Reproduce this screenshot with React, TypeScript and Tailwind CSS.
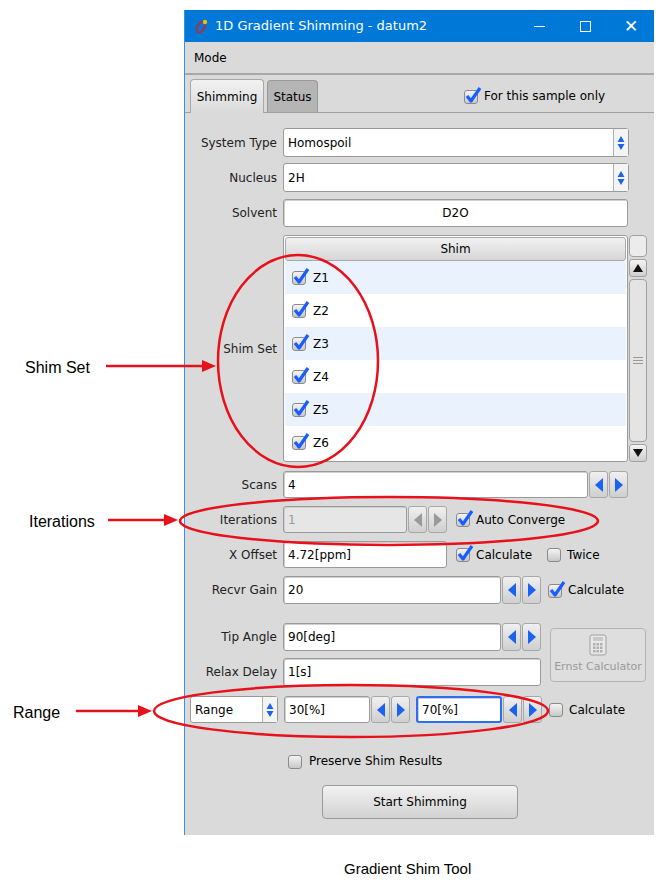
import React from "react";

const F = { fontFamily: '"DejaVu Sans", "Noto Sans", sans-serif' };

function Check({ on = true }: { on?: boolean }) {
  return (
    <span className="relative inline-block w-[15px] h-[15px] shrink-0">
      <span className="absolute left-0 top-[1px] w-[14px] h-[14px] rounded-[3px] border border-[#8a8a8a] bg-gradient-to-b from-[#f4f4f4] to-[#c8c8c8]" />
      {on && (
        <svg className="absolute left-[1px] -top-[3px]" width="17" height="18" viewBox="0 0 17 18">
          <path d="M2 10 L6 15 L15 2" stroke="#1a5cff" strokeWidth="3.2" fill="none" strokeLinejoin="round" />
        </svg>
      )}
    </span>
  );
}

function Arrows({ disabled = false }: { disabled?: boolean }) {
  const c = disabled ? "#9a9a9a" : "#1a62f0";
  return (
    <div className="flex gap-[1px] h-full shrink-0">
      {[0, 1].map((i) => (
        <div key={i} className="w-[19px] h-full rounded-[3px] border border-[#a8a8a8] bg-gradient-to-b from-[#f0f0f0] to-[#cfcfcf] flex items-center justify-center">
          <svg width="10" height="16" viewBox="0 0 10 16">
            {i === 0 ? <path d="M9 1 L1 8 L9 15 Z" fill={c} /> : <path d="M1 1 L9 8 L1 15 Z" fill={c} />}
          </svg>
        </div>
      ))}
    </div>
  );
}

function Field({ w, text, disabled = false, focus = false, center = false }: { w: string; text: string; disabled?: boolean; focus?: boolean; center?: boolean }) {
  return (
    <div className={`${w} h-full rounded-[3px] border ${focus ? "border-[#2a6ef5] border-2" : "border-[#9a9a9a]"} ${disabled ? "bg-[#e6e6e6] text-[#9a9a9a]" : "bg-white text-black"} flex items-center px-[4px] text-[12px] shadow-[inset_1px_1px_0_#cfcfcf] ${center ? "justify-center" : ""}`}>
      {text}
    </div>
  );
}

function Combo({ w, text }: { w: string; text: string }) {
  return (
    <div className={`${w} h-full rounded-[3px] border border-[#9a9a9a] bg-white flex items-stretch text-[12px]`}>
      <div className="flex-1 flex items-center px-[4px]">{text}</div>
      <div className="w-[15px] border-l border-[#b0b0b0] bg-[#f4f4f4] flex items-center justify-center">
        <svg width="8" height="16" viewBox="0 0 8 16">
          <path d="M4 1 L7.5 7 L0.5 7 Z M4 15 L0.5 9 L7.5 9 Z" fill="#1a62f0" />
        </svg>
      </div>
    </div>
  );
}

function Label({ t, dim = false }: { t: string; dim?: boolean }) {
  return <div className={`w-[92px] shrink-0 text-right text-[12px] ${dim ? "text-[#333]" : "text-[#222]"}`}>{t}</div>;
}

function Row({ label, h, mt, children }: { label: string; h: string; mt: string; children: React.ReactNode }) {
  return (
    <div className={`flex items-center ${mt} ${h}`}>
      <Label t={label} />
      <div className="ml-[6px] flex items-center h-full gap-[1px]">{children}</div>
    </div>
  );
}

export default function App() {
  const rows = ["Z1", "Z2", "Z3", "Z4", "Z5", "Z6"];
  return (
    <div className="relative w-[668px] h-[885px] bg-white overflow-hidden" style={F}>
      <div className="pt-[10px] pl-[184px]">
        <div className="w-[470px] h-[825px] bg-[#dadada] border-l border-[#3c8fdc] flex flex-col">
          <div className="h-[32px] bg-[#0078d7] flex items-center text-white text-[13px]">
            <svg className="ml-[9px]" width="16" height="16" viewBox="0 0 16 16">
              <ellipse cx="7" cy="9" rx="3.5" ry="6" transform="rotate(30 7 9)" fill="none" stroke="#d42020" strokeWidth="1.6" />
              <circle cx="11" cy="4" r="2.2" fill="#f2c200" />
            </svg>
            <span className="ml-[5px]">1D Gradient Shimming - datum2</span>
            <div className="ml-auto flex items-center">
              <span className="w-[46px] flex justify-center"><span className="w-[11px] h-[1px] bg-white" /></span>
              <span className="w-[46px] flex justify-center"><span className="w-[11px] h-[11px] border border-white" /></span>
              <span className="w-[46px] flex justify-center text-[17px] leading-none font-light">✕</span>
            </div>
          </div>
          <div className="h-[33px] flex items-center px-[9px] text-[12px] border-b-2 border-[#a8a8a8]">Mode</div>
          <div className="mt-[4px] h-[34px] flex items-end relative border-b border-[#a0a0a0]">
            <div className="ml-[5px] w-[74px] h-[34px] rounded-t-[4px] border border-b-0 border-[#a8a8a8] bg-[#e2e2e2] flex items-center justify-center text-[12px] -mb-[1px] bg-gradient-to-b from-[#f2f2f2] to-[#dadada]">Shimming</div>
            <div className="ml-[3px] w-[51px] h-[32px] rounded-t-[4px] border border-b-0 border-[#999] bg-[#b5b5b5] flex items-center justify-center text-[12px]">Status</div>
            <div className="absolute left-[279px] top-[8px] flex items-center gap-[5px] text-[12px]">
              <Check /> For this sample only
            </div>
          </div>

          <Row label="System Type" h="h-[29px]" mt="mt-[15px]"><Combo w="w-[346px]" text="Homospoil" /></Row>
          <Row label="Nucleus" h="h-[29px]" mt="mt-[6px]"><Combo w="w-[346px]" text="2H" /></Row>
          <Row label="Solvent" h="h-[28px]" mt="mt-[7px]"><Field w="w-[345px]" text="D2O" center /></Row>

          <div className="flex items-center mt-[8px] h-[227px]">
            <Label t="Shim Set" />
            <div className="ml-[6px] flex h-full">
              <div className="w-[345px] h-full border border-[#9a9a9a] rounded-[3px] bg-white flex flex-col p-[1px]">
                <div className="h-[24px] shrink-0 rounded-[3px] border border-[#a8a8a8] bg-gradient-to-b from-[#f2f2f2] to-[#d6d6d6] flex items-center justify-center text-[12px]">Shim</div>
                {rows.map((r, i) => (
                  <div key={r} className={`h-[33px] flex items-center gap-[6px] px-[7px] text-[12px] ${i % 2 === 0 ? "bg-[#eaf2fd]" : "bg-white"}`}>
                    <Check /> {r}
                  </div>
                ))}
              </div>
              <div className="ml-[1px] w-[18px] h-full flex flex-col gap-[2px]">
                <div className="h-[22px] rounded-[4px] border border-[#a0a0a0] bg-[#ececec]" />
                <div className="h-[18px] rounded-[3px] border border-[#a0a0a0] bg-gradient-to-b from-[#f4f4f4] to-[#cfcfcf] flex items-center justify-center">
                  <svg width="10" height="8" viewBox="0 0 10 8"><path d="M5 0 L10 8 L0 8 Z" fill="#111" /></svg>
                </div>
                <div className="flex-1 rounded-[4px] border border-[#a0a0a0] bg-[#e4e4e4] flex flex-col items-center justify-center gap-[2px]">
                  <span className="w-[10px] h-[1px] bg-[#999]" /><span className="w-[10px] h-[1px] bg-[#999]" /><span className="w-[10px] h-[1px] bg-[#999]" />
                </div>
                <div className="h-[18px] rounded-[3px] border border-[#a0a0a0] bg-gradient-to-b from-[#f4f4f4] to-[#cfcfcf] flex items-center justify-center">
                  <svg width="10" height="8" viewBox="0 0 10 8"><path d="M5 8 L10 0 L0 0 Z" fill="#111" /></svg>
                </div>
              </div>
            </div>
          </div>

          <Row label="Scans" h="h-[27px]" mt="mt-[9px]"><Field w="w-[305px]" text="4" /><Arrows /></Row>
          <Row label="Iterations" h="h-[27px]" mt="mt-[8px]">
            <Field w="w-[124px]" text="1" disabled /><Arrows disabled />
            <span className="ml-[8px] flex items-center gap-[5px] text-[12px]"><Check /> Auto Converge</span>
          </Row>
          <Row label="X Offset" h="h-[27px]" mt="mt-[8px]">
            <Field w="w-[164px]" text="4.72[ppm]" />
            <span className="ml-[8px] flex items-center gap-[5px] text-[12px]"><Check /> Calculate</span>
            <span className="ml-[14px] flex items-center gap-[5px] text-[12px]"><Check on={false} /> Twice</span>
          </Row>
          <Row label="Recvr Gain" h="h-[28px]" mt="mt-[8px]">
            <Field w="w-[218px]" text="20" /><Arrows />
            <span className="ml-[6px] flex items-center gap-[5px] text-[12px]"><Check /> Calculate</span>
          </Row>

          <div className="flex items-center mt-[19px]">
            <div className="flex flex-col gap-[7px]">
              <Row label="Tip Angle" h="h-[28px]" mt="mt-0"><Field w="w-[218px]" text="90[deg]" /><Arrows /></Row>
              <Row label="Relax Delay" h="h-[28px]" mt="mt-0"><Field w="w-[258px]" text="1[s]" /></Row>
            </div>
            <div className="ml-[9px] w-[96px] h-[54px] rounded-[4px] border border-[#b4b4b4] bg-[#dedede] flex flex-col items-center justify-center gap-[3px] text-[11px] text-[#9a9a9a]">
              <svg width="18" height="22" viewBox="0 0 18 22">
                <rect x="1" y="1" width="16" height="20" rx="2" fill="#e8e8e8" stroke="#a0a0a0" />
                <rect x="4" y="3" width="10" height="4" fill="#c8c8c8" />
                {[0, 1, 2].map((r) => [0, 1, 2].map((c) => <rect key={`${r}${c}`} x={4 + c * 3.5} y={9 + r * 3.5} width="2.5" height="2.5" fill="#b0b0b0" />))}
              </svg>
              Ernst Calculator
            </div>
          </div>

          <div className="flex items-center mt-[10px] h-[27px] gap-[1px]">
            <div className="ml-[5px] h-full"><Combo w="w-[88px]" text="Range" /></div>
            <div className="ml-[5px] h-full flex gap-[1px]"><Field w="w-[86px]" text="30[%]" /><Arrows /></div>
            <div className="ml-[5px] h-full flex gap-[1px]"><Field w="w-[86px]" text="70[%]" focus /><Arrows /></div>
            <span className="ml-[6px] flex items-center gap-[5px] text-[12px]"><Check on={false} /> Calculate</span>
          </div>

          <div className="mt-[29px] h-[18px] flex items-center gap-[6px] pl-[103px] text-[12px]">
            <Check on={false} /> Preserve Shim Results
          </div>
          <div className="mt-[15px] ml-[137px] w-[196px] h-[34px] rounded-[4px] border border-[#9a9a9a] bg-gradient-to-b from-[#f2f2f2] to-[#d2d2d2] flex items-center justify-center text-[12px]">Start Shimming</div>
        </div>
      </div>

      <div className="absolute left-[344px] top-[858px] text-[15px] text-black" style={{ fontFamily: '"Liberation Sans", Arial, sans-serif' }}>Gradient Shim Tool</div>
      <div className="absolute left-[25px] top-[356px] text-[16px]" style={{ fontFamily: '"Liberation Sans", Arial, sans-serif' }}>Shim Set</div>
      <div className="absolute left-[29px] top-[510px] text-[16px]" style={{ fontFamily: '"Liberation Sans", Arial, sans-serif' }}>Iterations</div>
      <div className="absolute left-[13px] top-[701px] text-[16px]" style={{ fontFamily: '"Liberation Sans", Arial, sans-serif' }}>Range</div>
      <svg className="absolute left-0 top-0 pointer-events-none" width="668" height="885">
        <g stroke="#e8101a" strokeWidth="2.5" fill="none">
          <ellipse cx="298" cy="361" rx="80" ry="106" />
          <ellipse cx="389" cy="521" rx="209" ry="24" />
          <ellipse cx="351" cy="711" rx="197" ry="26" />
          <line x1="106" y1="366" x2="204" y2="366" />
          <line x1="108" y1="520" x2="166" y2="520" />
          <line x1="76" y1="711" x2="140" y2="711" />
        </g>
        <g fill="#e8101a">
          <path d="M216 366 L202 360 L202 372 Z" />
          <path d="M178 520 L164 514 L164 526 Z" />
          <path d="M152 711 L138 705 L138 717 Z" />
        </g>
      </svg>
    </div>
  );
}
